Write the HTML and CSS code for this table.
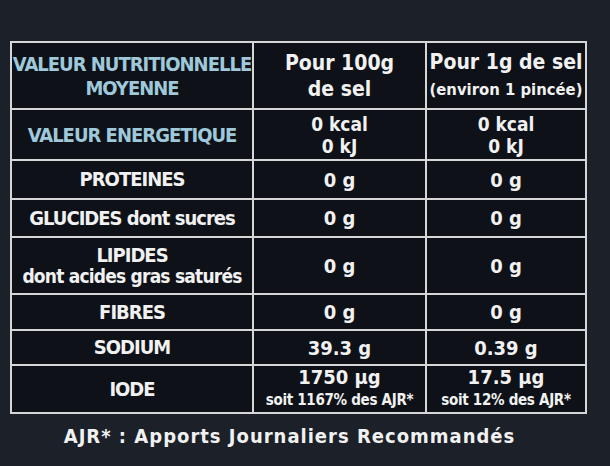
FILE: index.html
```html
<!DOCTYPE html>
<html lang="fr">
<head>
<meta charset="utf-8">
<link rel="stylesheet" href="styles.css">
</head>
<body>
<div class="label">
  <table class="nutri">
    <colgroup><col class="c1"><col class="c2"><col class="c3"></colgroup>
    <tr class="r-head">
      <td class="lbl blue">VALEUR NUTRITIONNELLE<br>MOYENNE</td>
      <td class="big">Pour 100g<br>de sel</td>
      <td class="big">Pour 1g de sel<br><span class="small">(environ 1 pincée)</span></td>
    </tr>
    <tr class="r-energy">
      <td class="lbl blue">VALEUR ENERGETIQUE</td>
      <td class="val kc">0 kcal<br>0 kJ</td>
      <td class="val kc">0 kcal<br>0 kJ</td>
    </tr>
    <tr class="r-prot">
      <td class="lbl">PROTEINES</td><td class="val">0 g</td><td class="val">0 g</td>
    </tr>
    <tr class="r-gluc">
      <td class="lbl">GLUCIDES dont sucres</td><td class="val">0 g</td><td class="val">0 g</td>
    </tr>
    <tr class="r-lip">
      <td class="lbl tight">LIPIDES<br><span class="sub">dont acides gras saturés</span></td><td class="val">0 g</td><td class="val">0 g</td>
    </tr>
    <tr class="r-fib">
      <td class="lbl">FIBRES</td><td class="val">0 g</td><td class="val">0 g</td>
    </tr>
    <tr class="r-sod">
      <td class="lbl">SODIUM</td><td class="val">39.3 g</td><td class="val">0.39 g</td>
    </tr>
    <tr class="r-iode">
      <td class="lbl">IODE</td>
      <td class="val tight">1750 µg<br><span class="tiny">soit 1167% des AJR*</span></td>
      <td class="val tight">17.5 µg<br><span class="tiny">soit 12% des AJR*</span></td>
    </tr>
  </table>
  <p class="foot">AJR* : Apports Journaliers Recommandés</p>
</div>
</body>
</html>
```

FILE: styles.css
```css
html, body {
  margin: 0;
  padding: 0;
  background: #1b2029;
}
body {
  width: 610px;
  height: 466px;
  overflow: hidden;
  font-family: "DejaVu Sans Condensed", "DejaVu Sans", sans-serif;
  font-weight: bold;
  color: #f1f1f1;
}
.label {
  padding: 41px 0 0 10px;
}
.nutri {
  border-collapse: collapse;
  table-layout: fixed;
  width: 575px;
  background: #0e1218;
}
.c1 { width: 242px; }
.c2 { width: 173px; }
.c3 { width: 160px; }
.nutri td {
  border: 2px solid #d6d6d6;
  text-align: center;
  vertical-align: middle;
  padding: 0;
  white-space: nowrap;
}
.nutri td.lbl {
  font-size: 20px;
  letter-spacing: -1px;
  line-height: 21px;
}
.nutri td.blue {
  color: #9fc8da;
  line-height: 24px;
}
.nutri td.big {
  font-size: 21px;
  line-height: 26px;
}
.nutri td.val {
  font-size: 20px;
  line-height: 20px;
}
.nutri td.tight {
  line-height: 21px;
}
.nutri td.kc {
  font-size: 19px;
  line-height: 22px;
}
.sub {
  font-size: 19px;
  letter-spacing: -0.8px;
}
.small {
  font-size: 16.5px;
}
.tiny {
  font-size: 15px;
  letter-spacing: -0.3px;
}
.r-head { height: 67px; }
.r-energy { height: 51px; }
.r-prot { height: 39px; }
.r-gluc { height: 38px; }
.r-lip { height: 57px; }
.r-fib { height: 36px; }
.r-sod { height: 35px; }
.r-iode { height: 48px; }
.foot {
  margin: 10px 0 0 0;
  width: 559px;
  padding-right: 16px;
  text-align: center;
  font-size: 20px;
  letter-spacing: 1px;
  color: #f1f1f1;
}
```
